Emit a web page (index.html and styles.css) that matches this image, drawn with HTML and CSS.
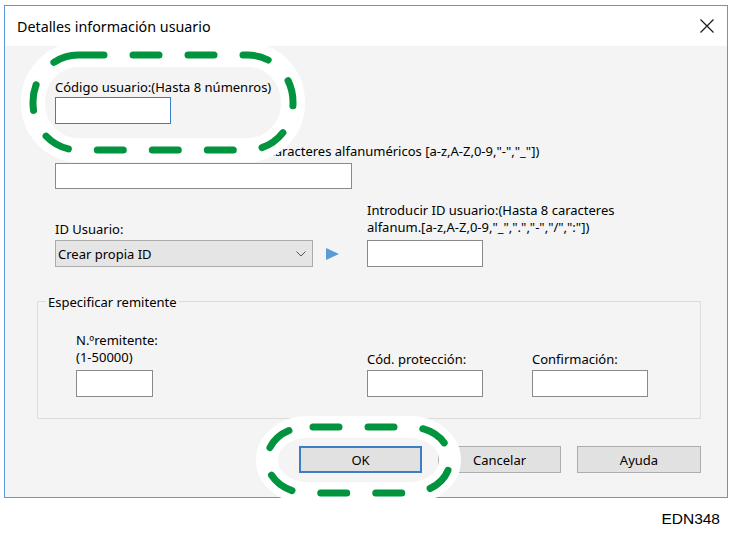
FILE: index.html
```html
<!DOCTYPE html>
<html lang="es">
<head>
    <meta charset="UTF-8">
    <title>Detalles información usuario</title>
    <link rel="stylesheet" href="styles.css">
</head>
<body>

<!-- Ventana del diálogo -->
<div class="window">
    <div class="titlebar">
        <span class="title">Detalles información usuario</span>
        <svg class="close" width="14" height="14" viewBox="0 0 14 14">
            <path d="M0.5 0.5 L13.5 13.5 M13.5 0.5 L0.5 13.5" stroke="#1a1a1a" stroke-width="1.2" fill="none"/>
        </svg>
    </div>

    <div class="content">
        <div class="field code">
            <label>Código usuario:(Hasta 8 númenros)</label>
            <input type="text" class="focused">
        </div>

        <div class="field name">
            <label>Nombre de usuario SMB:(Hasta 20 caracteres alfanuméricos [a-z,A-Z,0-9,"-","_"])</label>
            <input type="text" class="wide">
        </div>

        <div class="id-row">
            <div class="id-left">
                <label>ID Usuario:</label>
                <div class="select-row">
                    <div class="select">
                        <span>Crear propia ID</span>
                        <svg width="10" height="6" viewBox="0 0 10 6">
                            <polyline points="0.5,0.5 5,5 9.5,0.5" stroke="#555" stroke-width="1" fill="none"/>
                        </svg>
                    </div>
                    <svg class="play" width="13" height="12" viewBox="0 0 13 12">
                        <polygon points="0,0 13,6 0,12" fill="#5b9bd5"/>
                    </svg>
                </div>
            </div>
            <div class="id-right">
                <label>Introducir ID usuario:(Hasta 8 caracteres<br>alfanum.[a-z,A-Z,0-9,"_",".","-","/",":"])</label>
                <input type="text" class="mid">
            </div>
        </div>

        <fieldset class="group">
            <legend>Especificar remitente</legend>
            <div class="group-row">
                <div class="col col-num">
                    <label>N.ºremitente:<br>(1-50000)</label>
                    <input type="text" class="short">
                </div>
                <div class="col col-prot">
                    <label>Cód. protección:</label>
                    <input type="text" class="mid">
                </div>
                <div class="col col-conf">
                    <label>Confirmación:</label>
                    <input type="text" class="mid">
                </div>
            </div>
        </fieldset>

        <div class="buttons">
            <button class="btn default">OK</button>
            <button class="btn">Cancelar</button>
            <button class="btn wide-btn">Ayuda</button>
        </div>
    </div>
</div>

<div class="figure-code">EDN348</div>

<!-- Marcas de resaltado -->
<svg class="mark mark-code" width="295" height="130" viewBox="0 0 295 130">
    <rect x="18" y="17" width="260" height="95" rx="45" ry="47" fill="none" stroke="#fff" stroke-width="24"/>
    <rect x="18" y="17" width="260" height="95" rx="45" ry="47" fill="none" stroke="#00943e" stroke-width="7" stroke-dasharray="26 29" stroke-linecap="round"/>
</svg>
<svg class="mark mark-ok" width="220" height="100" viewBox="0 0 220 100">
    <rect x="17" y="17" width="183" height="66" rx="40" ry="33" fill="none" stroke="#fff" stroke-width="22"/>
    <rect x="17" y="17" width="183" height="66" rx="40" ry="33" fill="none" stroke="#00943e" stroke-width="7" stroke-dasharray="26 29" stroke-dashoffset="-6" stroke-linecap="round"/>
</svg>

</body>
</html>
```

FILE: styles.css
```css
body {
    margin: 0;
    background-color: #ffffff;
    font-family: "Noto Sans", sans-serif;
    font-size: 13px;
    color: #000;
}
.window {
    margin: 5px 0 0 4px;
    width: 724px;
    height: 493px;
    box-sizing: border-box;
    border: 1px solid #5c9ad7; /* Borde azul de la ventana */
    display: flex;
    flex-direction: column;
}
.titlebar {
    height: 40px;
    flex: none;
    background-color: #ffffff;
    display: flex;
    align-items: center;
    justify-content: space-between;
    padding: 0 13px 0 12px;
}
.title {
    font-size: 14.3px;
}
.content {
    flex: 1;
    background-color: #f4f4f4; /* Fondo gris del diálogo */
    padding: 33px 26px 0 32px;
}
label {
    display: block;
    line-height: 17px;
    white-space: nowrap;
}
input {
    display: block;
    box-sizing: border-box;
    height: 27px;
    margin: 0;
    padding: 0 3px;
    border: 1px solid #8a8a8a;
    background-color: #ffffff;
    outline: none;
}
.field {
    margin-left: 18px;
}
.code input {
    width: 116px;
    margin-top: 1px;
    border-color: #3b7dc6; /* Campo con foco */
}
.name {
    margin-top: 19px;
}
.name input {
    width: 297px;
    height: 26px;
    margin-top: 3px;
}
.id-row {
    margin-top: 13px;
    padding-left: 18px;
    display: flex;
    align-items: flex-end;
}
.id-left {
    width: 312px;
}
.select-row {
    display: flex;
    align-items: center;
    margin-top: 2px;
}
.select {
    box-sizing: border-box;
    width: 258px;
    height: 27px;
    border: 1px solid #acacac;
    background-color: #e5e5e5;
    display: flex;
    align-items: center;
    justify-content: space-between;
    padding: 0 6px 0 2px;
}
.play {
    margin-left: 13px;
}
.id-right input {
    margin-top: 4px;
}
input.mid {
    width: 116px;
}
input.short {
    width: 77px;
}
.group {
    margin: 24px 0 0 0;
    padding: 0 0 21px 0;
    border: 1px solid #dcdcdc; /* Borde claro del grupo */
    min-width: 0;
}
.group legend {
    margin-left: 8px;
    padding: 3px 2px 0 2px;
    line-height: 17px;
}
.group-row {
    margin-top: 21px;
    padding-left: 38px;
    display: flex;
    align-items: flex-end;
}
.col-num {
    width: 291px;
}
.col-num input {
    margin-top: 4px;
}
.col-prot {
    width: 165px;
}
.col-prot input,
.col-conf input {
    margin-top: 2px;
}
.buttons {
    margin-top: 27px;
    display: flex;
    justify-content: flex-end;
    gap: 16px;
}
.btn {
    box-sizing: border-box;
    width: 123px;
    height: 27px;
    margin: 0;
    padding: 0;
    border: 1px solid #adadad;
    background-color: #e1e1e1;
    font-family: "Noto Sans", sans-serif;
    font-size: 13px;
    color: #000;
}
.btn.default {
    border: 2px solid #3b7dc6; /* Botón por defecto */
}
.btn.wide-btn {
    width: 124px;
}
.figure-code {
    width: 720px;
    margin-top: 12px;
    text-align: right;
    font-family: "Liberation Sans", Arial, sans-serif;
    font-size: 15.5px;
    line-height: 18px;
}
.mark {
    position: absolute;
}
.mark-code {
    left: 15px;
    top: 38px;
}
.mark-ok {
    left: 250px;
    top: 410px;
}
```
